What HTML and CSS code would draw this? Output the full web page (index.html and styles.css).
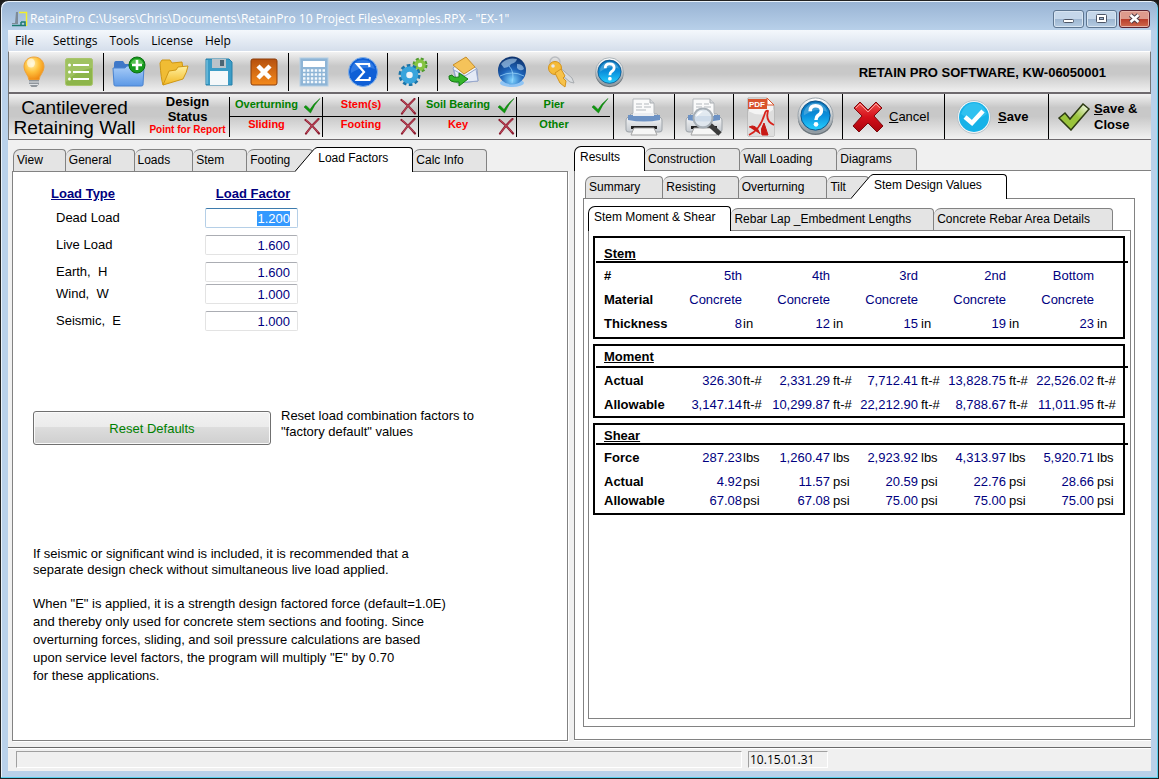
FILE: index.html
```html
<!DOCTYPE html>
<html lang="en">
<head>
  <meta charset="UTF-8">
  <title>RetainPro - EX-1</title>
  <link rel="stylesheet" href="styles.css">
</head>
<body>
  <!-- shared icon shapes -->
  <svg class="defs" width="0" height="0" aria-hidden="true">
    <defs>
      <linearGradient id="gBlue" x1="0" y1="0" x2="0" y2="1"><stop offset="0" stop-color="#0a6fb4"/><stop offset="0.5" stop-color="#0b8fdc"/><stop offset="1" stop-color="#25d0ff"/></linearGradient>
      <linearGradient id="gRim" x1="0" y1="0" x2="0" y2="1"><stop offset="0" stop-color="#ffffff"/><stop offset="1" stop-color="#8b969e"/></linearGradient>
      <linearGradient id="gPrinter" x1="0" y1="0" x2="0" y2="1"><stop offset="0" stop-color="#ffffff"/><stop offset="1" stop-color="#c3c8ce"/></linearGradient>
      <linearGradient id="gRed" x1="0" y1="0" x2="0" y2="1"><stop offset="0" stop-color="#f0524e"/><stop offset="0.5" stop-color="#d4101a"/><stop offset="1" stop-color="#a8040c"/></linearGradient>
      <linearGradient id="gOrange" x1="0" y1="0" x2="0" y2="1"><stop offset="0" stop-color="#b5500f"/><stop offset="1" stop-color="#f58a1c"/></linearGradient>
      <linearGradient id="gFolder" x1="0" y1="0" x2="0" y2="1"><stop offset="0" stop-color="#a9cdf8"/><stop offset="1" stop-color="#5b98e6"/></linearGradient>
      <linearGradient id="gYellow" x1="0" y1="0" x2="0" y2="1"><stop offset="0" stop-color="#fff0a0"/><stop offset="1" stop-color="#f2b822"/></linearGradient>
      <linearGradient id="gGreen" x1="0" y1="1" x2="1" y2="0"><stop offset="0.55" stop-color="#9ac43c"/><stop offset="1" stop-color="#ffffff"/></linearGradient>
      <radialGradient id="gBulb" cx="0.4" cy="0.3" r="0.7"><stop offset="0" stop-color="#fff2b0"/><stop offset="0.5" stop-color="#ffc23e"/><stop offset="1" stop-color="#f08a12"/></radialGradient>
      <radialGradient id="gGlobe" cx="0.5" cy="0.85" r="0.9"><stop offset="0" stop-color="#7fd4ff"/><stop offset="0.45" stop-color="#1d62b8"/><stop offset="1" stop-color="#0c2c62"/></radialGradient>
    </defs>
    <symbol id="tick" viewBox="0 0 18 18">
      <path d="M1 9 L3 7.500 L7 11.500 Q11 5 17 0.500 Q11 7 7.500 15 Z" fill="#0d9a0d" stroke="#087308" stroke-width="0.500"/>
    </symbol>
    <symbol id="cross" viewBox="0 0 18 18">
      <path d="M2.500 2 Q9 7 16 15.500 M15.500 1 Q8 8 3 15.500" fill="none" stroke="#8c1c30" stroke-width="2.200" stroke-linecap="round"/>
      <path d="M3 2 Q9 7 15 14 M15 1.500 Q8 8 3.500 15" fill="none" stroke="#cf5467" stroke-width="0.800"/>
    </symbol>
    <symbol id="help" viewBox="0 0 40 40">
      <ellipse cx="20" cy="22" rx="18" ry="17" fill="#6d767c"/>
      <circle cx="20" cy="19" r="18" fill="url(#gRim)" stroke="#9aa4ab"/>
      <circle cx="20" cy="19" r="15" fill="url(#gBlue)" stroke="#0a4f85"/>
      <path d="M8 15 Q12 6 20 6 Q29 6 32 15 Q20 10 8 19 Z" fill="#5fb2e0" opacity="0.600"/>
      <path d="M14.500 14.500 Q14.500 9 20 9 Q26 9 26 14 Q26 17 22.500 19 Q20.500 20.500 20.500 23.500" fill="none" stroke="#fff" stroke-width="3.600"/>
      <circle cx="20.500" cy="28" r="2.400" fill="#fff"/>
    </symbol>
    <symbol id="printer" viewBox="0 0 38 40">
      <path d="M8 2 H25 L29 6 V20 H8 Z" fill="#fafafa" stroke="#b4b8bc"/>
      <path d="M25 2 V6 H29" fill="#d5d8db" stroke="#a9adb1"/>
      <path d="M11 7 h6 M19 7 h5 M11 10 h6 M19 10 h7 M11 13 h10" stroke="#b3b8bd"/>
      <path d="M6 17 H32 L36 21 Q37 22 37 24 V33 Q37 35 34 35 H4 Q1 35 1 33 V24 Q1 22 2 21 Z" fill="url(#gPrinter)" stroke="#9da3a9"/>
      <path d="M3 18 H35 V23 Q19 26 3 23 Z" fill="#6d92c4"/>
      <path d="M8 16 H29 V19 H8 Z" fill="#eceef1"/>
      <path d="M6 29 H32 V32 H6 Z" fill="#222"/>
      <path d="M9 31 H29 L32 38 H6 Z" fill="#f6f6f6" stroke="#a5a5a5"/>
    </symbol>
  </svg>

  <div class="window">
    <header class="titlebar">
      <svg class="app-icon" width="16" height="16" viewBox="0 0 16 16">
        <path d="M4 1 H6 V13 H0 V12 H3 Z" fill="#7d8b98"/>
        <path d="M7 1.500 H14.500 V15" fill="none" stroke="#f2ee2c" stroke-width="1.500"/>
        <path d="M0 14.500 H14 M9 11 H13 V15 M9 11 V15" fill="none" stroke="#1d7a70" stroke-width="1.500"/>
      </svg>
      <h1 class="title">RetainPro C:\Users\Chris\Documents\RetainPro 10 Project Files\examples.RPX - "EX-1"</h1>
      <div class="window-buttons">
        <button class="win-btn" aria-label="Minimize"><svg width="13" height="13" viewBox="0 0 13 13"><rect x="1.500" y="7.500" width="10" height="3" rx="1" fill="#fff" stroke="#4c5566"/></svg></button>
        <button class="win-btn" aria-label="Maximize"><svg width="13" height="13" viewBox="0 0 13 13"><rect x="1.500" y="2.500" width="10" height="8" rx="1" fill="#fff" stroke="#4c5566"/><rect x="4.500" y="5.500" width="4" height="2" fill="#9fb7d0" stroke="#4c5566"/></svg></button>
        <button class="win-btn close" aria-label="Close"><svg width="13" height="13" viewBox="0 0 13 13"><path d="M2.500 3 L10.500 10 M10.500 3 L2.500 10" stroke="#4c3a44" stroke-width="4.600"/><path d="M2.500 3 L10.500 10 M10.500 3 L2.500 10" stroke="#fff" stroke-width="2.600"/></svg></button>
      </div>
    </header>

    <div class="client">
      <nav class="menubar">
        <button class="menu-item first">File</button>
        <button class="menu-item">Settings</button>
        <button class="menu-item">Tools</button>
        <button class="menu-item">License</button>
        <button class="menu-item">Help</button>
      </nav>

      <div class="toolbar">
        <div class="group">
          <button class="tool" aria-label="Tips">
            <svg width="32" height="34" viewBox="0 0 32 34"><path d="M16 2 C10 2 6 6 6 12 C6 17 10.500 20 11 25 H21 C21.500 20 26 17 26 12 C26 6 22 2 16 2 Z" fill="url(#gBulb)" stroke="#eda33a"/><ellipse cx="13" cy="8" rx="4" ry="4.500" fill="#fff" opacity="0.600"/><path d="M11 25 H21 V29 L18.500 32 H13.500 L11 29 Z" fill="#8f959b"/><path d="M11 27 H21 M11 29.500 H20" stroke="#dfe2e5"/></svg>
          </button>
          <button class="tool" aria-label="List">
            <svg width="28" height="28" viewBox="0 0 28 28"><rect x="0.500" y="0.500" width="27" height="27" rx="2" fill="#8db54a" stroke="#a9c46c"/><path d="M1 1 H27 V10 Q12 12 1 24 Z" fill="#a6c76a" opacity="0.700"/><path d="M8 7 H24 M8 14 H24 M8 21 H24" stroke="#fff" stroke-width="2"/><g fill="#fff"><circle cx="4.500" cy="7" r="1.500"/><circle cx="4.500" cy="14" r="1.500"/><circle cx="4.500" cy="21" r="1.500"/></g></svg>
          </button>
        </div>
        <div class="group">
          <button class="tool" aria-label="New project">
            <svg width="34" height="32" viewBox="0 0 34 32"><path d="M2 8 Q2 5 4 5 H11 L13 8 H29 V28 H2 Z" fill="#3f78c8"/><path d="M1 12 H13 L15 10 H32 L31 29 Q31 30 29 30 H4 Q2 30 2 29 Z" fill="url(#gFolder)" stroke="#4a83d0"/><circle cx="25" cy="9" r="8" fill="#169a1c" stroke="#0c6e12"/><path d="M18.500 8 Q20 3 25 3 Q30 3 31.500 8 Z" fill="#74d268" opacity="0.700"/><path d="M25 4 V14 M20 9 H30" stroke="#fff" stroke-width="2.600"/></svg>
          </button>
          <button class="tool" aria-label="Open project">
            <svg width="32" height="30" viewBox="0 0 32 30"><path d="M2 6 L4 3 L12 3 L14 6 L24 5 L25 12 L5 28 Q3 22 2 6 Z" fill="#f0bc34" stroke="#cf9714"/><path d="M5 28 L11 14 L18 13 L20 10 L30 9 Q29 15 25 22 Z" fill="url(#gYellow)" stroke="#cf9714"/></svg>
          </button>
          <button class="tool" aria-label="Save project">
            <svg width="28" height="28" viewBox="0 0 28 28"><path d="M1 1 H24 L27 4 V27 H1 Z" fill="#3b9cc6" stroke="#2580ab"/><rect x="7" y="1" width="14" height="9" fill="#b9c3ca"/><rect x="15" y="2" width="4" height="6" fill="#4b6574"/><rect x="5" y="13" width="18" height="14" fill="#f4f8fa"/><path d="M2 2 V26" stroke="#8ed0ea"/></svg>
          </button>
          <button class="tool" aria-label="Close project">
            <svg width="28" height="28" viewBox="0 0 28 28"><rect x="1" y="1" width="26" height="26" rx="2" fill="url(#gOrange)" stroke="#8c3c08"/><path d="M8 8 L20 20 M20 8 L8 20" stroke="#fff" stroke-width="4.500"/></svg>
          </button>
        </div>
        <div class="group wide">
          <button class="tool" aria-label="Calculator">
            <svg width="30" height="30" viewBox="0 0 30 30"><rect x="1" y="1" width="28" height="28" fill="#8fb5d6" stroke="#b4cfe5"/><rect x="4" y="4" width="22" height="6" fill="#fff"/><path d="M4 13.500 H26 M4 17.500 H26 M4 21.500 H26 M4 25 H26" stroke="#f4f9fd" stroke-width="2.400" stroke-dasharray="2.500 1.400"/></svg>
          </button>
          <button class="tool" aria-label="Sum">
            <svg width="30" height="30" viewBox="0 0 30 30"><circle cx="15" cy="15" r="14.500" fill="#0f5fd6" stroke="#7fb0ea"/><path d="M3 12 Q6 3 15 3 Q24 3 27 12 Q15 8 3 16 Z" fill="#3f86ea" opacity="0.700"/><path d="M21.500 10 L21 7 H9 L16 15 L9 23 H21.500 L22 20" fill="none" stroke="#fff" stroke-width="2.200"/></svg>
          </button>
        </div>
        <div class="group wide">
          <button class="tool" aria-label="Options">
            <svg width="30" height="30" viewBox="0 0 30 30"><circle cx="22" cy="8" r="5.500" fill="none" stroke="#4f9a2c" stroke-width="4" stroke-dasharray="2.600 1.720"/><circle cx="22" cy="8" r="4" fill="#eef4e8" stroke="#86c440" stroke-width="3.500"/><circle cx="11.500" cy="18" r="9" fill="none" stroke="#1b74a8" stroke-width="4" stroke-dasharray="3.400 2.250"/><circle cx="11.500" cy="18" r="6" fill="#eef4f8" stroke="#38a4dc" stroke-width="5.500"/></svg>
          </button>
        </div>
        <div class="group wide last">
          <button class="tool" aria-label="E-mail">
            <svg width="32" height="32" viewBox="0 0 32 32"><path d="M6 12 L18 2 L30 13 L31 25 L10 27 Z" fill="#eef2fa" stroke="#8e9fc4"/><path d="M6 9 L19 1 L28 11 L17 18 Z" fill="#f5c35a" stroke="#c98f28"/><path d="M7 14 L18 20 L29 13 L31 25 L10 27 Z" fill="#e4eaf6" stroke="#98a8cc"/><path d="M2 20 Q1 27 12 26 V30 L21 23 L12 17 V21 Q6 22 5 19 Z" fill="#35b52c" stroke="#147a12"/></svg>
          </button>
          <button class="tool" aria-label="Web site">
            <svg width="30" height="32" viewBox="0 0 30 32"><ellipse cx="15" cy="27" rx="12" ry="4" fill="#8fc4f4"/><circle cx="15" cy="14.500" r="14" fill="url(#gGlobe)"/><path d="M4 8 Q10 1 20 3 Q19 7 14 8 Q12 12 7 12 Z M20 8 Q26 8 27 13 Q23 16 20 12 Z" fill="#b8d8f4" opacity="0.600"/><path d="M3 20 Q15 14 27 20 M12 10 Q18 16 15 27" fill="none" stroke="#9fdcff" opacity="0.700"/></svg>
          </button>
          <button class="tool" aria-label="License keys">
            <svg width="30" height="32" viewBox="0 0 30 32"><circle cx="9" cy="6" r="5" fill="none" stroke="#b9bcc0" stroke-width="1.500"/><path d="M11 9 L26 22 L28 27 L24 26 L10 14 Z" fill="#d9dcdf" stroke="#a8acb0"/><circle cx="9" cy="12" r="6.500" fill="#f5bb38" stroke="#d4941c"/><path d="M9 17 L15 13 L19 20 L17 22 L20 25 L19 31 L14 27 Z" fill="#f7c24a" stroke="#d4941c"/><circle cx="7" cy="10" r="1.800" fill="#e8e8e8"/></svg>
          </button>
          <button class="tool" aria-label="Help">
            <svg width="31" height="31"><use href="#help"/></svg>
          </button>
        </div>
        <p class="licensee">RETAIN PRO SOFTWARE, KW-06050001</p>
      </div>

      <div class="status-row">
        <div class="module">Cantilevered<br>Retaining Wall</div>
        <div class="design-status">Design<br>Status<small>Point for Report</small></div>
        <div class="checks">
          <div class="check ok"><span>Overturning</span><svg><use href="#tick"/></svg></div>
          <div class="check bad"><span>Stem(s)</span><svg><use href="#cross"/></svg></div>
          <div class="check ok"><span>Soil Bearing</span><svg><use href="#tick"/></svg></div>
          <div class="check ok"><span>Pier</span><svg><use href="#tick"/></svg></div>
          <div class="check bad"><span>Sliding</span><svg><use href="#cross"/></svg></div>
          <div class="check bad"><span>Footing</span><svg><use href="#cross"/></svg></div>
          <div class="check bad"><span>Key</span><svg><use href="#cross"/></svg></div>
          <div class="check ok"><span>Other</span><svg></svg></div>
        </div>
        <button class="action print" aria-label="Print"><svg width="38" height="40"><use href="#printer"/></svg></button>
        <button class="action preview" aria-label="Print preview">
          <svg width="38" height="40" viewBox="0 0 38 40"><use href="#printer" width="38" height="40"/><path d="M24 27 L35 37" stroke="#3c3c3c" stroke-width="5"/><circle cx="18" cy="21" r="9.500" fill="#dfe8f0" fill-opacity="0.850" stroke="#a7afb6" stroke-width="2"/><path d="M11 20 Q12 14 18 14 Q15 17 11 20 Z" fill="#fff"/></svg>
        </button>
        <button class="action pdf" aria-label="PDF">
          <svg width="30" height="40" viewBox="0 0 30 40"><path d="M2 1 H21 L28 8 V39 H2 Z" fill="#f4f4f4" stroke="#a9a9a9"/><path d="M2 14 Q16 22 28 12 V39 H2 Z" fill="#dedede"/><path d="M2 2 H21 V12 H2 Z" fill="#d9532c"/><path d="M21 1 V8 H28 Z" fill="#fff" stroke="#d9532c"/><text x="3" y="10" class="pdf-label">PDF</text><path d="M3 38 Q14 33 19 16 Q20 13 22 14 Q19 24 28 28" fill="none" stroke="#d8231c" stroke-width="1.800"/><path d="M3 30 Q10 26 14 37 M16 38 Q14 32 18 26 L22 38 Z" fill="#c81a16" stroke="#c81a16"/></svg>
        </button>
        <button class="action about" aria-label="Help"><svg width="39" height="39"><use href="#help"/></svg></button>
        <button class="action cancel">
          <svg width="32" height="32" viewBox="0 0 32 32"><path d="M2 7 L8 1 L16 9 L24 1 L30 7 L22 15 L31 25 L25 31 L16 22 L7 31 L1 25 L10 15 Z" fill="url(#gRed)" stroke="#7a0a0e"/><path d="M4 7 L8 3 L16 11 L24 3 L28 7" fill="none" stroke="#f9a09c"/></svg>
          <span><u>C</u>ancel</span>
        </button>
        <button class="action save">
          <svg width="34" height="34" viewBox="0 0 34 34"><circle cx="17" cy="17" r="16.500" fill="#f2f5f7" stroke="#b9c2c8"/><circle cx="17" cy="17" r="15" fill="#16b2e8"/><path d="M4 14 Q8 3 17 3 Q26 3 30 14 Q17 24 4 14 Z" fill="#3cc8f4" opacity="0.700"/><path d="M8 17 L15 23 L26 11" fill="none" stroke="#fff" stroke-width="4.500"/></svg>
          <span><u>S</u>ave</span>
        </button>
        <button class="action save-close">
          <svg width="34" height="28" viewBox="0 0 34 28"><path d="M2 15 L8 10 L13 16 L26 1 L32 6 L14 27 Z" fill="url(#gGreen)" stroke="#2c3a12" stroke-width="1.500"/></svg>
          <span><u>S</u>ave &amp;<br>Close</span>
        </button>
      </div>

      <main class="main">
        <section class="pane left-pane">
          <div class="tabs" role="tablist">
            <button class="tab" role="tab">View</button>
            <button class="tab" role="tab">General</button>
            <button class="tab" role="tab">Loads</button>
            <button class="tab" role="tab">Stem</button>
            <button class="tab" role="tab">Footing</button>
            <button class="tab active slanted" role="tab" aria-selected="true">
              <svg class="slant" width="22" height="25" viewBox="0 0 22 25"><path d="M0 25 L18 4 Q20 0.500 22 0.500 V25 Z" fill="#fff"/><path d="M0 24.500 L17 4.500 Q20 0.500 22 0.500" fill="none" stroke="#000"/></svg><span>Load Factors</span>
            </button>
            <button class="tab" role="tab">Calc Info</button>
          </div>
          <div class="panel factors-panel">
            <form class="factors">
              <div class="factor-row heading"><b>Load Type</b><b class="value-head">Load Factor</b></div>
              <div class="factor-row"><label for="dead">Dead Load</label><input id="dead" type="text" value="1.200"></div>
              <div class="factor-row"><label for="live">Live Load</label><input id="live" type="text" value="1.600"></div>
              <div class="factor-row"><label for="earth">Earth,&nbsp; H</label><input id="earth" type="text" value="1.600"></div>
              <div class="factor-row tight"><label for="wind">Wind,&nbsp; W</label><input id="wind" type="text" value="1.000"></div>
              <div class="factor-row"><label for="seismic">Seismic,&nbsp; E</label><input id="seismic" type="text" value="1.000"></div>
            </form>
            <div class="reset">
              <button class="reset-btn">Reset Defaults</button>
              <p>Reset load combination factors to<br>"factory default" values</p>
            </div>
            <p class="note">If seismic or significant wind is included, it is recommended that a<br>separate design check without simultaneous live load applied.</p>
            <p class="note loose">When "E" is applied, it is a strength design factored force (default=1.0E)<br>and thereby only used for concrete stem sections and footing. Since<br>overturning forces, sliding, and soil pressure calculations are based<br>upon service level factors, the program will multiply "E" by 0.70<br>for these applications.</p>
          </div>
        </section>

        <section class="pane right-pane">
          <div class="tabs roomy" role="tablist">
            <button class="tab active" role="tab" aria-selected="true">Results</button>
            <button class="tab" role="tab">Construction</button>
            <button class="tab" role="tab">Wall Loading</button>
            <button class="tab" role="tab">Diagrams</button>
          </div>
          <div class="panel results-panel">
            <div class="tabs" role="tablist">
              <button class="tab" role="tab">Summary</button>
              <button class="tab" role="tab">Resisting</button>
              <button class="tab" role="tab">Overturning</button>
              <button class="tab" role="tab">Tilt</button>
              <button class="tab active slanted" role="tab" aria-selected="true">
                <svg class="slant" width="22" height="25" viewBox="0 0 22 25"><path d="M0 25 L18 4 Q20 0.500 22 0.500 V25 Z" fill="#fff"/><path d="M0 24.500 L17 4.500 Q20 0.500 22 0.500" fill="none" stroke="#000"/></svg><span>Stem Design Values</span>
              </button>
            </div>
            <div class="panel stem-panel">
              <div class="tabs" role="tablist">
                <button class="tab active" role="tab" aria-selected="true">Stem Moment &amp; Shear</button>
                <button class="tab" role="tab">Rebar Lap _Embedment Lengths</button>
                <button class="tab" role="tab">Concrete Rebar Area Details</button>
              </div>
              <div class="panel values-panel">
                <section class="box stem">
                  <h2>Stem</h2>
                  <table>
                    <colgroup><col class="c-label"><col class="c-first"><col class="c-unit"><col class="c-value"><col class="c-unit"><col class="c-value"><col class="c-unit"><col class="c-value"><col class="c-unit"><col class="c-value"><col></colgroup>
                    <tr><th>#</th><td>5th</td><td></td><td>4th</td><td></td><td>3rd</td><td></td><td>2nd</td><td></td><td>Bottom</td><td></td></tr>
                    <tr><th>Material</th><td>Concrete</td><td></td><td>Concrete</td><td></td><td>Concrete</td><td></td><td>Concrete</td><td></td><td>Concrete</td><td></td></tr>
                    <tr><th>Thickness</th><td>8</td><td class="unit">in</td><td>12</td><td class="unit">in</td><td>15</td><td class="unit">in</td><td>19</td><td class="unit">in</td><td>23</td><td class="unit">in</td></tr>
                  </table>
                </section>
                <section class="box moment">
                  <h2>Moment</h2>
                  <table>
                    <colgroup><col class="c-label"><col class="c-first"><col class="c-unit"><col class="c-value"><col class="c-unit"><col class="c-value"><col class="c-unit"><col class="c-value"><col class="c-unit"><col class="c-value"><col></colgroup>
                    <tr><th>Actual</th><td>326.30</td><td class="unit">ft-#</td><td>2,331.29</td><td class="unit">ft-#</td><td>7,712.41</td><td class="unit">ft-#</td><td>13,828.75</td><td class="unit">ft-#</td><td>22,526.02</td><td class="unit">ft-#</td></tr>
                    <tr><th>Allowable</th><td>3,147.14</td><td class="unit">ft-#</td><td>10,299.87</td><td class="unit">ft-#</td><td>22,212.90</td><td class="unit">ft-#</td><td>8,788.67</td><td class="unit">ft-#</td><td>11,011.95</td><td class="unit">ft-#</td></tr>
                  </table>
                </section>
                <section class="box shear">
                  <h2>Shear</h2>
                  <table>
                    <colgroup><col class="c-label"><col class="c-first"><col class="c-unit"><col class="c-value"><col class="c-unit"><col class="c-value"><col class="c-unit"><col class="c-value"><col class="c-unit"><col class="c-value"><col></colgroup>
                    <tr><th>Force</th><td>287.23</td><td class="unit">lbs</td><td>1,260.47</td><td class="unit">lbs</td><td>2,923.92</td><td class="unit">lbs</td><td>4,313.97</td><td class="unit">lbs</td><td>5,920.71</td><td class="unit">lbs</td></tr>
                    <tr><th>Actual</th><td>4.92</td><td class="unit">psi</td><td>11.57</td><td class="unit">psi</td><td>20.59</td><td class="unit">psi</td><td>22.76</td><td class="unit">psi</td><td>28.66</td><td class="unit">psi</td></tr>
                    <tr class="close-row"><th>Allowable</th><td>67.08</td><td class="unit">psi</td><td>67.08</td><td class="unit">psi</td><td>75.00</td><td class="unit">psi</td><td>75.00</td><td class="unit">psi</td><td>75.00</td><td class="unit">psi</td></tr>
                  </table>
                </section>
              </div>
            </div>
          </div>
        </section>
      </main>

      <footer class="statusbar">
        <div class="status-cell message"></div>
        <div class="status-cell version">10.15.01.31</div>
        <div class="status-space"></div>
      </footer>
    </div>
  </div>

  <script>
    // start with the first factor ready to overtype
    const dead = document.getElementById("dead");
    dead.focus();
    dead.select();
  </script>
</body>
</html>
```
FILE: styles.css
```css
* {
  box-sizing: border-box;
}

body {
  margin: 0;
  background: #1c1c1c;
  font-family: "Liberation Sans", Arial, sans-serif;
  font-size: 13px;
  line-height: 15px;
  color: #000;
}

button {
  font: inherit;
  color: inherit;
  background: none;
  border: none;
  padding: 0;
  margin: 0;
}

p, h1, h2 {
  margin: 0;
}

svg {
  display: block;
  flex-shrink: 0;
}

.defs {
  position: absolute;
}

.window {
  display: flex;
  flex-direction: column;
  min-height: 100vh;
  padding: 0 6px 6px;
  border: 1px solid #222;
  border-radius: 8px 8px 0 0;
  background: linear-gradient(#98b3d3, #b9d1ea 30px, #b9d1ea);
  box-shadow: inset -1px -1px #59d0ef, inset 1px 1px #e9f2fa;
}

/* title bar */
.titlebar {
  display: flex;
  align-items: center;
  height: 29px;
  padding: 6px 2px 0 5px;
}

.title {
  flex: 1;
  margin-left: 2px;
  font-family: "Open Sans", "Noto Sans", sans-serif;
  font-size: 12px;
  font-weight: normal;
  color: #fff;
  white-space: nowrap;
}

.window-buttons {
  display: flex;
  gap: 2px;
}

.win-btn {
  display: flex;
  align-items: center;
  justify-content: center;
  width: 31px;
  height: 18px;
  border: 1px solid #5d7590;
  border-radius: 3px;
  background: linear-gradient(#c5d7ea 50%, #9db6d1 50%, #b5cbe2);
  box-shadow: inset 0 0 0 1px #d8e5f2;
}

.win-btn.close {
  border-color: #5a2230;
  background: linear-gradient(#dd9a8c 50%, #b83c2a 50%, #cf6a4e);
  box-shadow: inset 0 0 0 1px #e6b3a8;
}

.client {
  display: flex;
  flex-direction: column;
  flex: 1;
  margin: 0 1px 1px;
  background: #f0f0f0;
}

/* menu */
.menubar {
  display: flex;
  height: 21px;
  background: linear-gradient(#f4f8fc, #d5deeb);
}

.menu-item {
  padding: 0 6px;
  font-family: "Open Sans", "Noto Sans", sans-serif;
  font-size: 12px;
}

.menu-item.first {
  padding: 0 13px 0 7px;
}

/* toolbar */
.toolbar {
  display: flex;
  align-items: center;
  height: 43px;
  border: 1px solid #767676;
  border-top-color: #fff;
  border-bottom: 2px solid #6e6a6e;
  background: linear-gradient(#f2f2f2, #c8c8c8 35%, #c8c8c8 55%, #f0f0f0);
}

.group {
  display: flex;
  align-items: center;
  height: 38px;
  padding: 0 2px;
  border-right: 1px solid #000;
}

.group.wide {
  padding: 0;
}

.group.last {
  border-right: none;
}

.tool {
  display: flex;
  justify-content: center;
  width: 45px;
}

.wide .tool {
  width: 49px;
}

.licensee {
  flex: 1;
  padding-right: 44px;
  text-align: right;
  font-weight: bold;
}

/* design status row */
.status-row {
  display: flex;
  height: 46px;
  border-left: 1px solid #767676;
  border-bottom: 1px solid #6e6a6e;
  background: linear-gradient(#f2f2f2, #c8c8c8 30%, #c8c8c8 50%, #f2f2f2);
}

.module {
  width: 131px;
  padding-top: 4px;
  text-align: center;
  font-size: 19px;
  line-height: 20px;
  white-space: nowrap;
}

.design-status {
  width: 89px;
  padding-left: 6px;
  text-align: center;
  font-weight: bold;
}

.design-status small {
  display: block;
  font-size: 10px;
  line-height: 11px;
  color: #f00;
}

.checks {
  display: grid;
  grid-template-columns: 93px 96px 98px 93px;
  grid-template-rows: 20px 20px;
  margin: 3px 3px 2px 0;
  border-left: 1px solid #000;
}

.check {
  display: flex;
  align-items: center;
  font-size: 11px;
  font-weight: bold;
  border-right: 1px solid #000;
}

.check:nth-child(-n+4) {
  border-bottom: 1px solid #000;
}

.check:nth-child(4n) {
  border-right: none;
}

.check span {
  flex: 1;
  padding-bottom: 5px;
  text-align: center;
}

.check svg {
  width: 18px;
  height: 18px;
  margin-right: 1px;
}

.check.ok {
  color: #008000;
}

.check.bad {
  color: #f00;
}

.action {
  display: flex;
  align-items: center;
  justify-content: center;
  border-left: 1px solid #000;
}

.print {
  width: 61px;
}

.preview {
  width: 59px;
}

.pdf {
  width: 55px;
}

.about {
  width: 54px;
}

.cancel {
  width: 102px;
  justify-content: flex-start;
  padding-left: 9px;
  gap: 5px;
}

.save {
  width: 104px;
  justify-content: flex-start;
  padding-left: 12px;
  gap: 7px;
  font-weight: bold;
}

.save-close {
  flex: 1;
  justify-content: flex-start;
  padding-left: 8px;
  gap: 3px;
  text-align: left;
  font-weight: bold;
  line-height: 16px;
}

.pdf-label {
  font-size: 8px;
  font-weight: bold;
  fill: #fff;
}

/* tabs */
.main {
  display: grid;
  grid-template-columns: 556fr 577fr;
  gap: 6px;
  flex: 1;
  padding: 6px 0 7px 4px;
}

.pane {
  display: flex;
  flex-direction: column;
}

.left-pane {
  margin: 1px 0 -1px;
}

.tabs {
  display: flex;
  align-items: flex-end;
  height: 24px;
  position: relative;
  z-index: 1;
}

.tab {
  height: 22px;
  padding: 0 22px 0 3px;
  border: 1px solid #828282;
  border-bottom: none;
  border-left-width: 0;
  border-radius: 7px 4px 0 0;
  background: #e4e4e4;
  font-size: 12px;
  white-space: nowrap;
}

.tab:first-child {
  border-left-width: 1px;
}

.roomy .tab {
  padding-right: 24px;
}

.tab.active {
  height: 25px;
  margin-bottom: -1px;
  padding: 0 24px 3px 5px;
  border-color: #000;
  background: #fff;
}

.tab.slanted {
  display: flex;
  margin-left: -18px;
  padding: 0;
  border: none;
  background: none;
}

.slanted span {
  height: 25px;
  padding: 3px 24px 0 1px;
  border: 1px solid #000;
  border-width: 1px 1px 0 0;
  border-radius: 0 4px 0 0;
  background: #fff;
}

.panel {
  flex: 1;
  border: 1px solid #828282;
  background: #fff;
}

/* load factors */
.left-pane .tabs {
  padding-left: 1px;
}

.factors-panel {
  padding: 14px 20px;
  box-shadow: 1px 1px #fff;
}

.factors {
  padding-left: 18px;
}

.factor-row {
  display: grid;
  grid-template-columns: 154px 93px;
  align-items: center;
  margin-top: 7px;
}

.factor-row.heading {
  margin-top: 0;
  color: #000080;
  text-decoration: underline;
}

.factor-row.tight {
  margin-top: 2px;
}

.factor-row label {
  padding: 0 0 1px 5px;
}

.value-head {
  padding-left: 3px;
  text-align: center;
}

.factor-row input {
  height: 20px;
  padding: 0 7px;
  border: 1px solid #e3e3e3;
  border-top-color: #abadb3;
  border-radius: 2px;
  outline: none;
  font: inherit;
  text-align: right;
  color: #000080;
}

.factor-row input:focus {
  border-color: #b5cfe7;
  border-top-color: #3d7bad;
}

.factor-row input::selection {
  background: #3399ff;
  color: #fff;
}

.reset {
  display: flex;
  gap: 10px;
  margin-top: 77px;
}

.reset p {
  line-height: 16px;
}

.reset-btn {
  width: 238px;
  height: 34px;
  margin-top: 3px;
  border: 1px solid #707070;
  border-radius: 3px;
  background: linear-gradient(#f2f2f2, #ebebeb 48%, #dddddd 48%, #cfcfcf);
  box-shadow: inset 0 0 0 1px #fafafa;
  color: #008000;
}

.note {
  margin-top: 101px;
  line-height: 16px;
}

.note.loose {
  margin-top: 17px;
  line-height: 18px;
}

/* results */
.right-pane .panel {
  display: flex;
  flex-direction: column;
}

.right-pane .results-panel {
  padding: 3px 16px 12px 8px;
  border-right: none;
  box-shadow: 0 1px #fff;
}

.results-panel > .tabs {
  padding-left: 2px;
}

.stem-panel {
  padding: 7px 3px 7px 4px;
}

.stem-panel .tab.active {
  padding-right: 15px;
}

.right-pane .values-panel {
  gap: 5px;
  padding: 5px 5px 0 4px;
}

.box {
  border: 2px solid #000;
}

.box.stem {
  padding-bottom: 2px;
}

.box h2 {
  margin: 0 -5px 0 1px;
  padding: 8px 8px 0;
  border-bottom: 2px solid #000;
  font-size: 13px;
  line-height: 15px;
  text-decoration: underline;
}

.moment h2 {
  padding: 3px 8px 2px;
}

.shear h2 {
  padding-top: 3px;
}

table {
  width: 100%;
  table-layout: fixed;
  border-collapse: collapse;
}

.c-label {
  width: 90px;
}

.c-first {
  width: 57px;
}

.c-unit {
  width: 25px;
}

.c-value {
  width: 63px;
}

th, td {
  height: 24px;
  padding: 0;
  white-space: nowrap;
}

th {
  padding-left: 9px;
  text-align: left;
}

td {
  text-align: right;
  color: #000080;
}

td.unit {
  padding-left: 3px;
  text-align: left;
  color: #000;
}

td.unit:nth-child(3) {
  padding-left: 1px;
}

.shear .close-row th, .shear .close-row td {
  height: 20px;
  padding-bottom: 5px;
}

/* status bar */
.statusbar {
  display: flex;
  gap: 6px;
  padding: 3px 8px;
  border-top: 1px solid #696969;
  box-shadow: inset 0 1px #fff;
}

.status-cell {
  height: 17px;
  border: 1px solid #fff;
  border-top-color: #a0a0a0;
  border-left-color: #a0a0a0;
  font-family: "Open Sans", "Noto Sans", sans-serif;
  font-size: 12px;
}

.message {
  flex: 1;
}

.version {
  width: 80px;
  padding-left: 1px;
}

.status-space {
  width: 309px;
}
```
